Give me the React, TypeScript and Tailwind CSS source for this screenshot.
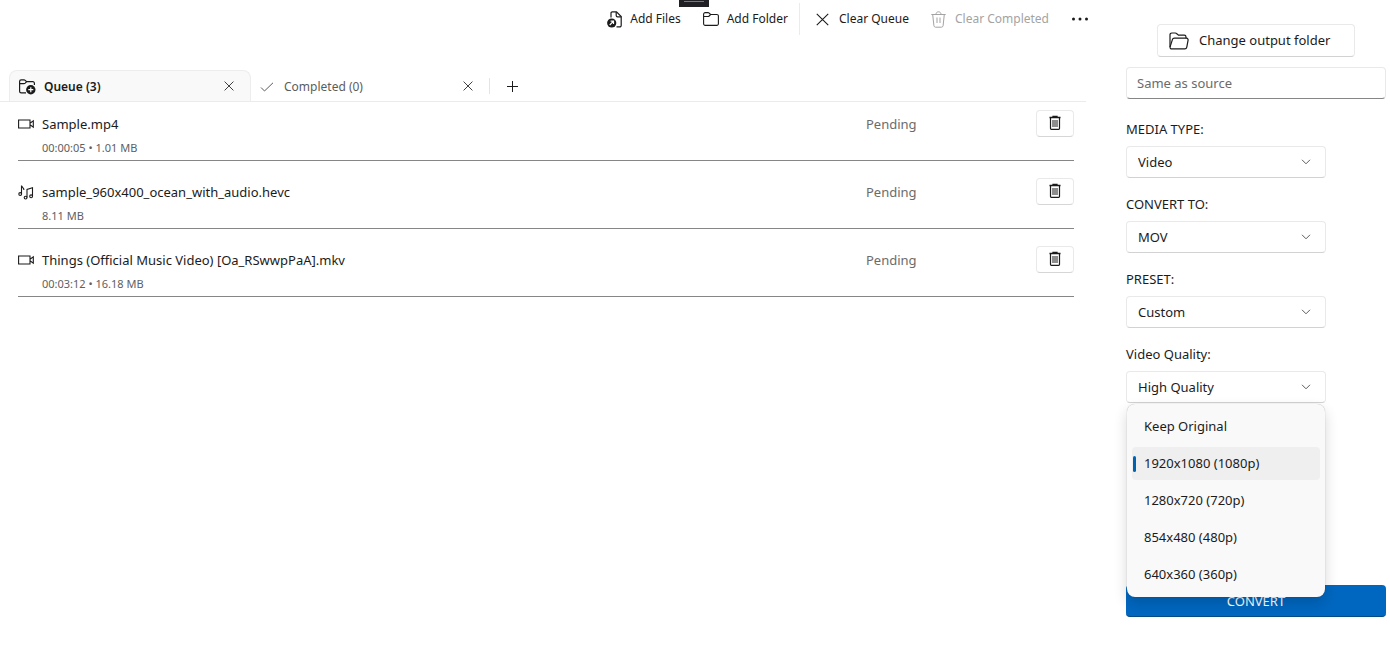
import { useState } from 'react';
import type { ReactNode } from 'react';

type QueueItem = {
  name: string;
  details: string;
  kind: 'video' | 'audio';
  status: string;
};

const QUEUE: QueueItem[] = [
  { name: 'Sample.mp4', details: '00:00:05 • 1.01 MB', kind: 'video', status: 'Pending' },
  { name: 'sample_960x400_ocean_with_audio.hevc', details: '8.11 MB', kind: 'audio', status: 'Pending' },
  { name: 'Things (Official Music Video) [Oa_RSwwpPaA].mkv', details: '00:03:12 • 16.18 MB', kind: 'video', status: 'Pending' },
];

const RESOLUTIONS = ['Keep Original', '1920x1080 (1080p)', '1280x720 (720p)', '854x480 (480p)', '640x360 (360p)'];

function AddFilesIcon() {
  return (
    <svg width="15" height="17" viewBox="0 0 15 17" fill="none" stroke="currentColor" strokeWidth="1.2">
      <path d="M4 6.500V2.200A1.300 1.300 0 0 1 5.300.9h4.200l4.700 4.700v8.800a1.500 1.500 0 0 1-1.500 1.500H9.500" />
      <path d="M9.200.9v3.600c0 .8.500 1.300 1.300 1.300h3.700" />
      <circle cx="4.700" cy="12" r="4.600" fill="currentColor" stroke="none" />
      <path d="M2.700 14 6.300 10.400M3.600 10.200h2.900v2.900" stroke="white" />
    </svg>
  );
}

function FolderIcon() {
  return (
    <svg width="16" height="14" viewBox="0 0 16 14" fill="none" stroke="currentColor" strokeWidth="1.1">
      <path d="M.6 2.200A1.600 1.600 0 0 1 2.200.6H5c.5 0 .9.2 1.200.5l1.400 1.400h6.200a1.600 1.600 0 0 1 1.600 1.600v7.700a1.600 1.600 0 0 1-1.600 1.600H2.200a1.600 1.600 0 0 1-1.600-1.600z" />
      <path d="M.6 4.500H5c.5 0 .9-.2 1.200-.5l1.400-1.500" />
    </svg>
  );
}

function QueueIcon() {
  return (
    <svg width="17" height="16" viewBox="0 0 17 16" fill="none" stroke="currentColor" strokeWidth="1.2">
      <path d="M7 13.800H2.200a1.600 1.600 0 0 1-1.600-1.600v-9.800A1.600 1.600 0 0 1 2.200.8H5c.5 0 .9.200 1.200.5l1.400 1.400h6.200a1.600 1.600 0 0 1 1.600 1.600V6" />
      <path d="M.6 4.700H5c.5 0 .9-.2 1.200-.5l1.400-1.500" />
      <circle cx="11.800" cy="10.700" r="4.700" fill="currentColor" stroke="none" />
      <path d="M11.800 8.200v5M9.300 10.700h5" stroke="white" />
    </svg>
  );
}

function OpenFolderIcon() {
  return (
    <svg width="20" height="18" viewBox="0 0 20 18" fill="none" stroke="currentColor" strokeWidth="1.2">
      <path d="M1 15V2.800A1.800 1.800 0 0 1 2.800 1h3.500c.5 0 .9.200 1.200.5l2 1.700h5.700A1.800 1.800 0 0 1 17 5v1.200" />
      <path d="M5.400 6.200h12.100c1.100 0 1.800 1 1.600 2l-1.300 7c-.2 1-1 1.700-2 1.700H2.800c-1.200 0-2-1-1.700-2.100L3.400 7.600c.2-.9 1-1.400 2-1.400z" />
    </svg>
  );
}

function CloseIcon({ size }: { size: number }) {
  return (
    <svg width={size} height={size} viewBox="0 0 12 12" fill="none" stroke="currentColor">
      <path d="m.7.7 10.600 10.600M11.300.7.7 11.300" />
    </svg>
  );
}

function ClearIcon() {
  return (
    <svg width="15" height="17" viewBox="0 0 15 17" fill="none" stroke="currentColor">
      <path d="M.3 3.500h14.400M1.700 3.500l1.200 11.200c.1.900.8 1.500 1.600 1.500h6c.8 0 1.500-.6 1.600-1.500l1.200-11.200M5 3.300C5 1.900 6 .8 7.500.8S10 1.900 10 3.300M6 6.500v5.500M9 6.500v5.500" />
    </svg>
  );
}

function TrashIcon() {
  return (
    <svg width="12" height="15" viewBox="0 0 12 15" fill="none" stroke="currentColor">
      <path d="M.5 2.500h11M4 2.500v-1h4v1" strokeWidth="1.300" />
      <path d="M1.500 2.500v11a.8.800 0 0 0 .8.800h7.400a.8.800 0 0 0 .8-.8v-11" strokeWidth="1.200" />
      <path d="M4 5v7M6 5v7M8 5v7" />
    </svg>
  );
}

function VideoIcon() {
  return (
    <svg width="16" height="10" viewBox="0 0 16 10" fill="none" stroke="currentColor" strokeWidth="1.1">
      <path d="M.6 1h11.400v8H.6zM12 4.200l3.300-2.300v6.200L12 5.800" />
    </svg>
  );
}

function MusicIcon() {
  return (
    <svg width="16" height="15" viewBox="0 0 16 15" fill="none" stroke="currentColor" strokeWidth="1.1">
      <path d="M3.500 9V.6c.2 1.700 2.700 2 2.400 4.400" />
      <circle cx="2.200" cy="9" r="1.400" />
      <path d="M9 12.600V4.400l5.500-1.600v8.400" />
      <circle cx="7.600" cy="12.600" r="1.400" />
      <circle cx="13.100" cy="11.300" r="1.400" />
    </svg>
  );
}

function ToolbarButton({ icon, label, disabled }: { icon: ReactNode; label: string; disabled?: boolean }) {
  return (
    <button type="button" disabled={disabled} className="flex items-center gap-2 px-[11px] text-xs disabled:text-[#a3a3a3]">
      <span className="flex w-4 justify-center">{icon}</span>
      {label}
    </button>
  );
}

function Field({ id, label, options }: { id: string; label: string; options: string[] }) {
  return (
    <div className="mt-4 w-[200px]">
      <label htmlFor={id} className="block text-[13px] leading-5">
        {label}
      </label>
      <div className="relative mt-[7px]">
        <select
          id={id}
          className="block h-8 w-full appearance-none rounded border border-[#e9e9e9] border-b-[#d2d2d2] bg-white pl-[11px] pr-8 pt-0.5 text-[13px]"
        >
          {options.map((option) => (
            <option key={option}>{option}</option>
          ))}
        </select>
        <svg
          className="pointer-events-none absolute right-[15px] top-3 text-[#5c5c5c]"
          width="10"
          height="8"
          viewBox="0 0 10 8"
          fill="none"
          stroke="currentColor"
        >
          <path d="m1 1.800 4 4 4-4" />
        </svg>
      </div>
    </div>
  );
}

function ResolutionMenu() {
  const [selected, setSelected] = useState('1920x1080 (1080p)');

  return (
    <div
      role="listbox"
      aria-label="Resolution"
      className="absolute left-px top-full mt-px flex w-[198px] flex-col gap-1 rounded-lg bg-[#f9f9f9] px-[5px] py-1.5 shadow-[0_0_1px_rgba(0,0,0,0.35),0_6px_14px_rgba(0,0,0,0.16)]"
    >
      {RESOLUTIONS.map((resolution) => (
        <button
          key={resolution}
          type="button"
          role="option"
          aria-selected={selected === resolution}
          onClick={() => setSelected(resolution)}
          className="flex h-[33px] items-center gap-2 rounded pl-px text-left text-[13px] aria-selected:bg-[#efefef]"
        >
          <span className={`h-4 w-[3px] rounded-full ${selected === resolution ? 'bg-[#0063b1]' : ''}`} />
          {resolution}
        </button>
      ))}
    </div>
  );
}

export default function App() {
  return (
    <div className="relative flex min-h-screen bg-white font-['Noto_Sans',sans-serif] text-[#1b1b1b]">
      {/* Window grip */}
      <div className="absolute inset-x-0 top-0 flex justify-center pr-0.5">
        <div className="h-[7px] w-[30px] bg-[#202024] px-[5px] pt-px">
          <div className="h-px bg-[#77777c]" />
        </div>
      </div>

      <main className="min-w-0 flex-1 pr-10">
        <div className="-mr-3.5 flex h-[38px] items-center justify-end">
          <ToolbarButton icon={<AddFilesIcon />} label="Add Files" />
          <ToolbarButton icon={<FolderIcon />} label="Add Folder" />
          <div className="mr-1 h-8 w-px bg-[#ebebeb]" />
          <ToolbarButton icon={<CloseIcon size={13} />} label="Clear Queue" />
          <ToolbarButton icon={<ClearIcon />} label="Clear Completed" disabled />
          <button type="button" aria-label="More" className="px-[11px]">
            <svg width="18" height="4" viewBox="0 0 18 4" fill="currentColor">
              <circle cx="2.500" cy="2" r="1.500" />
              <circle cx="9" cy="2" r="1.500" />
              <circle cx="15.500" cy="2" r="1.500" />
            </svg>
          </button>
        </div>

        {/* Tabs */}
        <div className="mt-8 flex h-8 items-stretch border-b border-[#ebebeb] pl-[9px] text-xs">
          <div className="flex w-[242px] items-center rounded-t-lg border border-b-0 border-[#ededed] bg-[#f9f9f9] pl-[9px] pr-4">
            <button type="button" className="flex flex-1 items-center gap-2 pt-px font-semibold">
              <QueueIcon />
              Queue (3)
            </button>
            <button type="button" aria-label="Close queue">
              <CloseIcon size={10} />
            </button>
          </div>
          <div className="flex w-[238px] items-center pl-[9px] pr-4">
            <button type="button" className="flex flex-1 items-center gap-2.5 pt-0.5 text-[#5c5c5c]">
              <svg width="14" height="10" viewBox="0 0 14 10" fill="none" stroke="currentColor">
                <path d="m1 5.500 3.500 3.500L13 .8" />
              </svg>
              Completed (0)
            </button>
            <button type="button" aria-label="Close completed">
              <CloseIcon size={10} />
            </button>
          </div>
          <div className="h-4 w-px self-center bg-[#e4e4e4]" />
          <button type="button" aria-label="New tab" className="px-[17px] pt-px">
            <svg width="11" height="11" viewBox="0 0 11 11" fill="none" stroke="currentColor">
              <path d="M5.500 0v11M0 5.500h11" />
            </svg>
          </button>
        </div>

        {/* Queue */}
        <ul className="flex flex-col gap-[9px] pl-[18px] pr-3">
          {QUEUE.map((item) => (
            <li key={item.name} className="flex items-start border-b border-[#868686] pb-0.5 pt-2">
              <span className="flex h-7 w-6 items-center">{item.kind === 'video' ? <VideoIcon /> : <MusicIcon />}</span>
              <div className="min-w-0 flex-1">
                <p className="text-[13px] leading-7">{item.name}</p>
                <p className="text-[11px] leading-5 text-[#606060]">{item.details}</p>
              </div>
              <span className="w-[170px] text-[13px] leading-7 text-[#6b6b6b]">{item.status}</span>
              <button
                type="button"
                aria-label={`Remove ${item.name}`}
                className="flex h-[27px] w-[38px] items-center justify-center rounded border border-[#e9e9e9] border-b-[#d6d6d6] pb-0.5"
              >
                <TrashIcon />
              </button>
            </li>
          ))}
        </ul>
      </main>

      <aside className="w-[264px] pr-1 pt-6">
        <button
          type="button"
          className="mx-auto flex h-[33px] w-[198px] items-center gap-2.5 rounded border border-[#e9e9e9] border-b-[#d2d2d2] pl-[11px] text-[13px]"
        >
          <OpenFolderIcon />
          Change output folder
        </button>
        <input
          type="text"
          aria-label="Output folder"
          placeholder="Same as source"
          className="mb-5 mt-2.5 block h-8 w-full rounded border border-[#e9e9e9] border-b-[#868686] px-2.5 text-[13px] placeholder:text-[#6b6b6b]"
        />

        <Field id="media-type" label="MEDIA TYPE:" options={['Video', 'Audio', 'Image']} />
        <Field id="convert-to" label="CONVERT TO:" options={['MOV', 'MP4', 'MKV']} />
        <Field id="preset" label="PRESET:" options={['Custom', 'Default']} />
        <div className="relative">
          <Field id="video-quality" label="Video Quality:" options={['High Quality', 'Medium Quality', 'Low Quality']} />
          <ResolutionMenu />
        </div>

        <button type="button" className="mt-[182px] h-8 w-full rounded border-b border-[#004a86] bg-[#0067c0] pt-0.5 text-[13px] text-white">
          CONVERT
        </button>
      </aside>
    </div>
  );
}
